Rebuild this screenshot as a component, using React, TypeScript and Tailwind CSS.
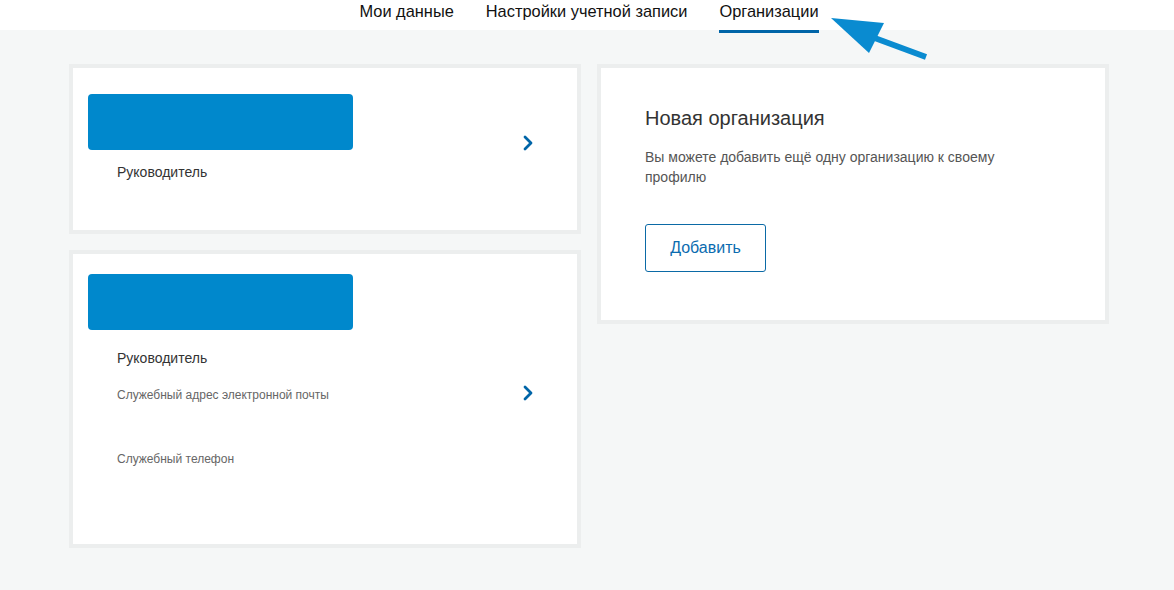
import React from "react";

const TABS = ["Мои данные", "Настройки учетной записи", "Организации"];

function Chevron() {
  return (
    <svg width="12" height="16" viewBox="0 0 12 16" className="block">
      <polyline points="3,2 9,8 3,14" fill="none" stroke="#0065a8" strokeWidth="2.8" strokeLinecap="round" strokeLinejoin="round" />
    </svg>
  );
}

function Card({ children, className = "" }: { children: React.ReactNode; className?: string }) {
  return (
    <div className={"border-4 border-[#eceeee] bg-white " + className}>{children}</div>
  );
}

export default function App() {
  return (
    <div className="relative min-h-screen bg-[#f5f7f7]" style={{ fontFamily: '"Liberation Sans", Arial, sans-serif' }}>
      {/* top tabs */}
      <div className="h-[30px] bg-white flex justify-center gap-[32px] pl-[4px]">
        {TABS.map((t, i) => (
          <div key={t} className="relative h-[30px] flex items-center">
            <span className="text-[16.4px] leading-[18px] text-[#111] -mt-[9px]">{t}</span>
            {i === 2 && <span className="absolute left-0 right-0 top-[30px] h-[3px] bg-[#0065a8]" />}
          </div>
        ))}
      </div>

      {/* arrow */}
      <svg className="absolute left-[820px] top-[8px]" width="120" height="60" viewBox="820 8 120 60">
        <polygon points="831,18 884,23 869,53" fill="#0a8bd0" />
        <line x1="872" y1="37" x2="926" y2="57" stroke="#0a8bd0" strokeWidth="6" />
      </svg>

      <div className="flex gap-[16px] pl-[69px] pt-[34px]">
        <div className="w-[512px] flex flex-col gap-[16px]">
          <Card className="h-[170px] flex">
            <div className="flex-1 pl-[15px] pt-[26px]">
              <div className="w-[265px] h-[56px] rounded-[4px] bg-[#0088cc]" />
              <div className="pl-[29px] mt-[14px] text-[14px] leading-[16px] text-[#333]">Руководитель</div>
            </div>
            <div className="self-center mr-[43px] mb-[12px]">
              <Chevron />
            </div>
          </Card>

          <Card className="h-[298px] flex">
            <div className="flex-1 pl-[15px] pt-[20px]">
              <div className="w-[265px] h-[56px] rounded-[4px] bg-[#0088cc]" />
              <div className="pl-[29px] mt-[20px] text-[14px] leading-[16px] text-[#333]">Руководитель</div>
              <div className="pl-[29px] mt-[22px] text-[12px] leading-[14px] text-[#666]">Служебный адрес электронной почты</div>
              <div className="pl-[29px] mt-[50px] text-[12px] leading-[14px] text-[#666]">Служебный телефон</div>
            </div>
            <div className="self-center mr-[43px] mb-[12px]">
              <Chevron />
            </div>
          </Card>
        </div>

        <div className="w-[512px]">
          <Card className="h-[260px] px-[44px] pt-[38px]">
            <div className="text-[20px] leading-[24px] text-[#333]">Новая организация</div>
            <div className="mt-[17px] max-w-[380px] text-[14px] leading-[20px] text-[#555]">
              Вы можете добавить ещё одну организацию к своему профилю
            </div>
            <button className="mt-[37px] w-[121px] h-[48px] rounded-[3px] border border-[#0b6aa6] bg-white text-[16px] text-[#0b6cb0]">
              Добавить
            </button>
          </Card>
        </div>
      </div>
    </div>
  );
}
